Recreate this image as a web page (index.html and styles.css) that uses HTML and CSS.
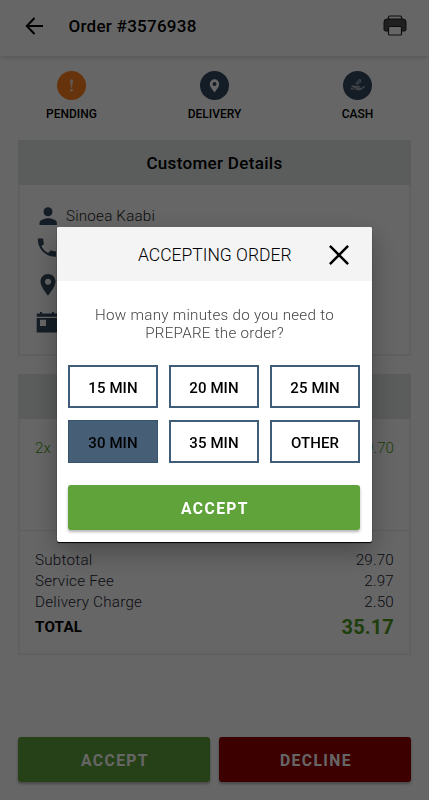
FILE: index.html
```html
<!DOCTYPE html>
<html lang="en">
<head>
<meta charset="utf-8">
<title>Order #3576938</title>
<link rel="stylesheet" href="styles.css">
</head>
<body>
<div class="screen">
  <header class="topbar">
    <svg class="back" width="20" height="20" viewBox="0 0 20 20"><path d="M18 10H2.500M9.500 2 1.800 10l7.700 8" fill="none" stroke="#000" stroke-width="2"/></svg>
    <h1>Order #3576938</h1>
    <svg class="printer" width="24" height="21" viewBox="0 0 24 21"><path d="M5.500 4V2.200Q5.500 1 6.700 1h10.600q1.200 0 1.200 1.200V4" fill="none" stroke="#222" stroke-width="1.200"/><path d="M4 4h16q3 0 3 3v7.500q0 1.500-1.500 1.500h-19Q1 16 1 14.500V7q0-3 3-3z" fill="#505050" stroke="#222"/><rect x="5.500" y="11.500" width="13" height="8.500" rx="1" fill="#fff" stroke="#222" stroke-width="1.200"/></svg>
  </header>
  <section class="statuses">
    <div class="status"><svg width="29" height="29" viewBox="0 0 29 29"><circle cx="14.500" cy="14.500" r="14.500" fill="#ff801f"/><path d="M13 9.800q0-1.300 1.500-1.300T16 9.800l-1 6.700h-1z" fill="#f3e0cf"/><circle cx="14.500" cy="19.300" r="1.300" fill="#f3e0cf"/></svg><span>PENDING</span></div>
    <div class="status"><svg width="29" height="29" viewBox="0 0 29 29"><circle cx="14.500" cy="14.500" r="14.500" fill="#34495e"/><path fill-rule="evenodd" d="M14.500 21.500C11.500 17.500 9.800 15.500 9.800 13a4.700 4.700 0 0 1 9.400 0c0 2.500-1.700 4.500-4.700 8.500zM14.500 11a2 2 0 1 0 0 4 2 2 0 0 0 0-4z" fill="#fff"/></svg><span>DELIVERY</span></div>
    <div class="status"><svg width="29" height="29" viewBox="0 0 29 29"><circle cx="14.500" cy="14.500" r="14.500" fill="#34495e"/><g fill="#9ba6b0"><path d="M7.500 15.500q3-2 5.500-.7l4 .2q1 .8-.3 1.500l-3 .2 4 .2 3.600-1.900q1.300 0 .5 1.200l-4.600 3.100q-2.200.4-4.700-.9l-4.500.2-1-.8 3-1.500z"/><path d="m12 11.800 4.500-3.800 1.700.6-.2 2.800-3.700 2.800z"/></g><path d="m12 12 5-2.200M9 16.700l4.500 1.400M14 13.300l4-2" stroke="#34495e" stroke-width=".6"/></svg><span>CASH</span></div>
  </section>
  <section class="card customer">
    <h2>Customer Details</h2>
    <div class="contact">
      <div class="row"><svg width="26" height="24" viewBox="0 0 26 24"><circle cx="13" cy="7.700" r="4.500"/><path d="M4.500 21v-2.200c0-3 5.500-4.600 8.700-4.600s8.700 1.600 8.700 4.600V21z"/></svg>Sinoea Kaabi</div>
      <div class="row phone"><svg width="26" height="24" viewBox="0 0 26 24"><path transform="translate(-.5 -.5)" d="M6.900 10.800c1.500 2.900 3.800 5.200 6.700 6.700l2.200-2.200c.3-.3.700-.4 1-.2 1.200.4 2.400.6 3.700.6.600 0 1 .4 1 1v3.500c0 .6-.4 1-1 1C11.100 21.200 3.300 13.400 3.300 4c0-.6.400-1 1-1h3.500c.6 0 1 .4 1 1 0 1.300.2 2.500.6 3.700.1.300 0 .7-.2 1z"/></svg></div>
      <div class="row pin"><svg width="26" height="24" viewBox="0 0 26 24"><path fill-rule="evenodd" d="M13 1C8.700 1 5.500 4.300 5.500 8.500c0 5.500 7.500 14.100 7.500 14.100s7.500-8.600 7.500-14.100C20.500 4.300 17.300 1 13 1zm0 4.700a3 3 0 1 1 0 6 3 3 0 0 1 0-6z"/></svg></div>
      <div class="row date"><svg width="26" height="24" viewBox="0 0 26 24"><path fill-rule="evenodd" d="M1.700 3.500H5V2h2v1.500h10V2h2v1.500h5.700v3.300h-23zM1.700 8h23v14.500h-23zM5 9.800v6.200h6V9.800z"/></svg></div>
    </div>
  </section>
  <section class="card order">
    <h2></h2>
    <div class="item"><span>2x</span><span>29.70</span></div>
    <div class="totals">
      <div><span>Subtotal</span><span>29.70</span></div>
      <div><span>Service Fee</span><span>2.97</span></div>
      <div><span>Delivery Charge</span><span>2.50</span></div>
      <div class="total"><strong>TOTAL</strong><b>35.17</b></div>
    </div>
  </section>
  <footer class="actions">
    <button class="btn accept">ACCEPT</button>
    <button class="btn decline">DECLINE</button>
  </footer>
</div>
<div class="overlay">
  <div class="dialog">
    <div class="dialog-head">
      <span>ACCEPTING ORDER</span>
      <svg width="20" height="20" viewBox="0 0 20 20"><path d="m.9.900 18.200 18.200M19.100.900.900 19.100" stroke="#000" stroke-width="2.500"/></svg>
    </div>
    <p>How many minutes do you need to<br>PREPARE the order?</p>
    <div class="times">
      <button>15 MIN</button><button>20 MIN</button><button>25 MIN</button>
      <button class="selected">30 MIN</button><button>35 MIN</button><button>OTHER</button>
    </div>
    <button class="btn accept confirm">ACCEPT</button>
  </div>
</div>
</body>
</html>
```
FILE: styles.css
```css
* { box-sizing: border-box; }
body { margin: 0; font-family: Roboto, sans-serif; color: #000; background: #fff; }
h1, h2, p { margin: 0; }
button { font-family: inherit; padding: 0; }
svg { display: block; flex: none; }
.screen { height: 800px; display: flex; flex-direction: column; overflow: hidden; }
.topbar { height: 56px; flex: none; display: flex; align-items: center; padding: 0 22px 4px 25px; box-shadow: 0 1px 5px rgba(0,0,0,.18); }
.topbar h1 { font-size: 17px; font-weight: 500; margin-left: 23.5px; flex: 1; letter-spacing: .27px; }
.printer { margin-top: -2px; }
.statuses { display: grid; grid-template-columns: repeat(3, 1fr); height: 84px; flex: none; padding-top: 15px; }
.status { display: flex; flex-direction: column; align-items: center; font-size: 12px; font-weight: 500; line-height: 14px; gap: 7px; }
.card { margin: 0 18px; border: 2px solid #eef3f2; border-top: 0; flex: none; }
.card h2 { height: 45px; margin: 0 -2px; background: #e2e8e6; text-align: center; font-size: 17px; font-weight: 500; line-height: 47px; letter-spacing: .32px; }
.customer { height: 216px; }
.contact { padding: 15px 15px; color: #222; fill: #34495e; }
.row { height: 32px; display: flex; align-items: center; gap: 5px; font-size: 15.2px; font-weight: 300; letter-spacing: .2px; }
.pin { height: 42px; }
.date { height: 32px; }
.order { height: 281px; margin-top: 18px; }
.item { height: 112px; padding: 19px 15px; display: flex; justify-content: space-between; color: #48a010; font-size: 15.2px; line-height: 20px; font-weight: 350; border-bottom: 1px solid #ebebeb; }
.totals { padding: 19px 15px; color: #223; font-size: 15.2px; font-weight: 300; line-height: 21px; letter-spacing: .25px; }
.totals > div { display: flex; justify-content: space-between; height: 21px; }
.totals > div span:last-child { letter-spacing: .2px; }
.totals .total { height: 28px; line-height: 27px; align-items: center; }
.total strong { font-weight: 700; color: #000; letter-spacing: .2px; }
.total b { font-size: 20px; font-weight: 700; color: #4c9c20; letter-spacing: .15px; }
.actions { display: flex; gap: 9px; margin: auto 18px 18px; }
.btn { flex: 1; height: 45px; padding: 2px 0 0 2px; border: 0; border-radius: 3px; color: #fff; font-size: 15.7px; font-weight: 700; letter-spacing: 1.4px; box-shadow: 0 2px 3px rgba(0,0,0,.3); }
.accept { background: #5fa33a; }
.decline { background: #960000; }
.overlay { position: fixed; inset: 0; background: rgba(0,0,0,.6); display: flex; align-items: flex-start; justify-content: center; padding-top: 227px; }
.dialog { width: 315px; height: 315px; background: #fff; border-radius: 2px; overflow: hidden; box-shadow: 0 1px 1px #000, 0 10px 28px rgba(0,0,0,.3); }
.dialog-head { height: 54px; background: #f4f4f4; display: flex; align-items: center; justify-content: space-between; padding: 1px 23px 0 81px; font-size: 17.5px; font-weight: 300; }
.dialog p { margin-top: 25px; text-align: center; font-size: 15.2px; line-height: 18px; font-weight: 300; color: #444; letter-spacing: .26px; }
.times { display: grid; grid-template-columns: repeat(3, 90px); gap: 12px 11px; margin: 23px 11px 22px; height: 98px; }
.times button { border: 2px solid #3f5d78; background: #fff; padding-top: 2px; font-size: 15px; font-weight: 500; color: #000; letter-spacing: .1px; }
.times .selected { background: #475e77; border-color: #34536f; border-width: 1px; }
.confirm { display: block; width: 292px; margin: 0 11px; }
```
